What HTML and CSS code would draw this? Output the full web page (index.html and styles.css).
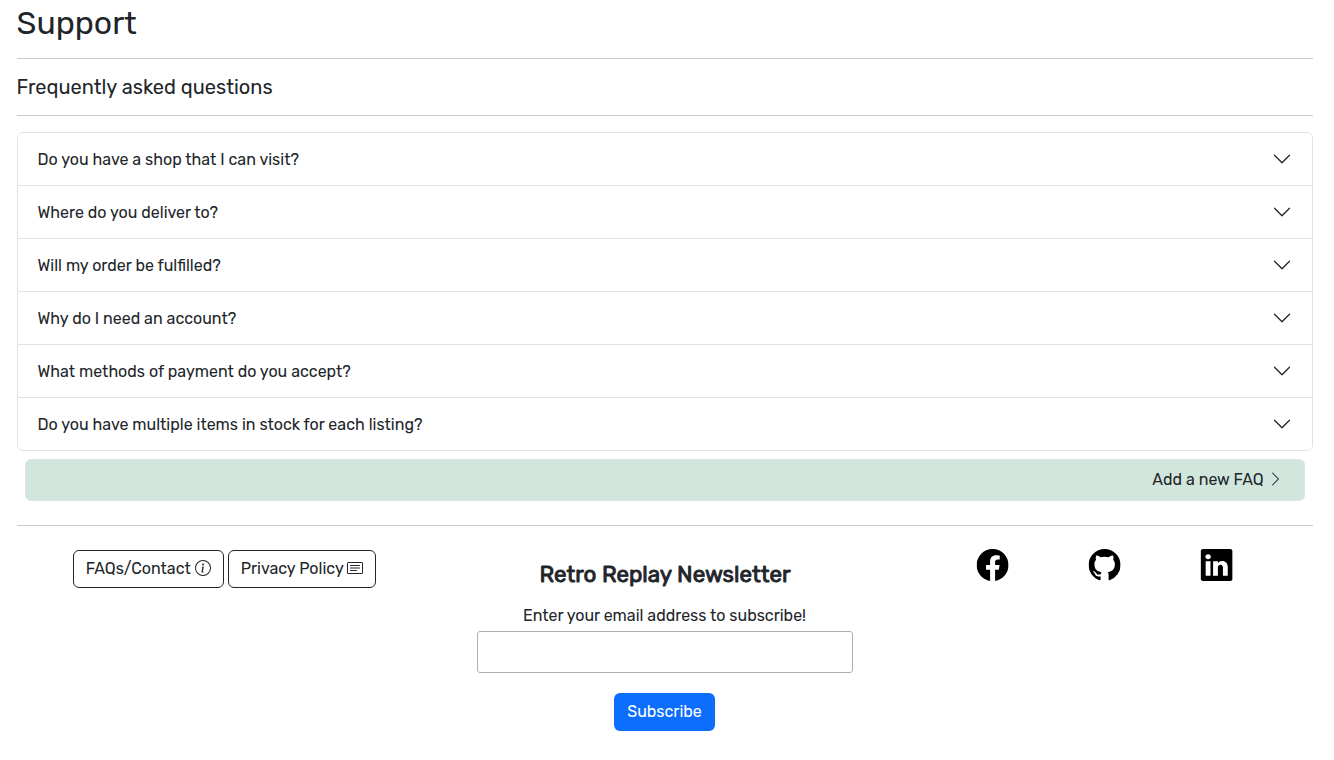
FILE: index.html
```html
<!DOCTYPE html>
<html lang="en">
<head>
<meta charset="utf-8">
<title>Support</title>
<link rel="stylesheet" href="styles.css">
</head>
<body>
<svg class="sprite" aria-hidden="true">
  <symbol id="chevron-down" viewBox="0 0 16 16"><path fill-rule="evenodd" d="M1.646 4.646a.5.5 0 0 1 .708 0L8 10.293l5.646-5.647a.5.5 0 0 1 .708.708l-6 6a.5.5 0 0 1-.708 0l-6-6a.5.5 0 0 1 0-.708z"/></symbol>
</svg>
<main class="page">
  <h1 class="title">Support</h1>
  <hr class="rule">
  <h2 class="subtitle">Frequently asked questions</h2>
  <hr class="rule">
  <div class="accordion">
    <button class="question"><span class="question-text">Do you have a shop that I can visit?</span><svg class="chevron"><use href="#chevron-down"/></svg></button>
    <button class="question"><span class="question-text">Where do you deliver to?</span><svg class="chevron"><use href="#chevron-down"/></svg></button>
    <button class="question"><span class="question-text">Will my order be fulfilled?</span><svg class="chevron"><use href="#chevron-down"/></svg></button>
    <button class="question"><span class="question-text">Why do I need an account?</span><svg class="chevron"><use href="#chevron-down"/></svg></button>
    <button class="question"><span class="question-text">What methods of payment do you accept?</span><svg class="chevron"><use href="#chevron-down"/></svg></button>
    <button class="question"><span class="question-text">Do you have multiple items in stock for each listing?</span><svg class="chevron"><use href="#chevron-down"/></svg></button>
  </div>
  <a class="add-faq"><span>Add a new FAQ</span><svg class="icon" viewBox="0 0 16 16"><path fill-rule="evenodd" d="M4.646 1.646a.5.5 0 0 1 .708 0l6 6a.5.5 0 0 1 0 .708l-6 6a.5.5 0 0 1-.708-.708L10.293 8 4.646 2.354a.5.5 0 0 1 0-.708z"/></svg></a>
  <hr class="rule footer-rule">
</main>
<footer class="footer">
  <div class="links">
    <a class="btn-outline btn-faq"><span>FAQs/Contact</span><svg class="icon" viewBox="0 0 16 16"><path d="M8 15A7 7 0 1 1 8 1a7 7 0 0 1 0 14zm0 1A8 8 0 1 0 8 0a8 8 0 0 0 0 16z"/><path d="m8.930 6.588-2.290.287-.082.380.450.083c.294.070.352.176.288.469l-.738 3.468c-.194.897.105 1.319.808 1.319.545 0 1.178-.252 1.465-.598l.088-.416c-.200.176-.492.246-.686.246-.275 0-.375-.193-.304-.533zM9 4.500a1 1 0 1 1-2 0 1 1 0 0 1 2 0z"/></svg></a>
    <a class="btn-outline btn-privacy"><span>Privacy Policy</span><svg class="icon" viewBox="0 0 16 16"><path d="M14.500 3a.5.5 0 0 1 .5.5v9a.5.5 0 0 1-.5.5h-13a.5.5 0 0 1-.5-.5v-9a.5.5 0 0 1 .5-.5zm-13-1A1.500 1.500 0 0 0 0 3.500v9A1.500 1.500 0 0 0 1.500 14h13a1.500 1.500 0 0 0 1.500-1.500v-9A1.500 1.500 0 0 0 14.500 2z"/><path d="M3 5.500a.5.5 0 0 1 .5-.5h9a.5.5 0 0 1 0 1h-9a.5.5 0 0 1-.5-.5M3 8a.5.5 0 0 1 .5-.5h9a.5.5 0 0 1 0 1h-9A.5.5 0 0 1 3 8m0 2.500a.5.5 0 0 1 .5-.5h6a.5.5 0 0 1 0 1h-6a.5.5 0 0 1-.5-.5"/></svg></a>
  </div>
  <form class="newsletter">
    <h3 class="news-title">Retro Replay Newsletter</h3>
    <label class="news-label" for="email">Enter your email address to subscribe!</label>
    <input class="news-input" id="email" type="email">
    <button class="subscribe" type="button">Subscribe</button>
  </form>
  <div class="social">
    <svg class="logo" viewBox="0 0 16 16"><path d="M16 8.049c0-4.446-3.582-8.050-8-8.050C3.580 0-.002 3.603-.002 8.050c0 4.017 2.926 7.347 6.750 7.951v-5.625h-2.030V8.050H6.750V6.275c0-2.017 1.195-3.131 3.022-3.131.876 0 1.791.157 1.791.157v1.980h-1.009c-.993 0-1.303.621-1.303 1.258v1.510h2.218l-.354 2.326H9.250V16c3.824-.604 6.750-3.934 6.750-7.951z"/></svg>
    <svg class="logo" viewBox="0 0 16 16"><path d="M8 0C3.580 0 0 3.580 0 8c0 3.540 2.290 6.530 5.470 7.590.4.070.55-.17.55-.38 0-.19-.01-.82-.01-1.490-2.010.37-2.530-.49-2.690-.94-.09-.23-.48-.94-.82-1.130-.28-.15-.68-.52-.01-.53.63-.01 1.080.58 1.230.82.72 1.210 1.870.87 2.330.66.07-.52.28-.87.51-1.070-1.780-.2-3.640-.89-3.640-3.950 0-.87.31-1.590.82-2.150-.08-.2-.36-1.020.08-2.120 0 0 .67-.21 2.200.82.64-.18 1.320-.27 2-.27s1.360.09 2 .27c1.530-1.040 2.200-.82 2.200-.82.44 1.100.16 1.920.08 2.120.51.56.82 1.270.82 2.150 0 3.070-1.870 3.750-3.650 3.950.29.25.54.73.54 1.480 0 1.070-.01 1.930-.01 2.200 0 .21.15.46.55.38A8.010 8.010 0 0 0 16 8c0-4.420-3.580-8-8-8z"/></svg>
    <svg class="logo" viewBox="0 0 16 16"><path d="M0 1.146C0 .513.526 0 1.175 0h13.650C15.474 0 16 .513 16 1.146v13.708c0 .633-.526 1.146-1.175 1.146H1.175C.526 16 0 15.487 0 14.854zm4.943 12.248V6.169H2.542v7.225zm-1.200-8.212c.837 0 1.358-.554 1.358-1.248-.015-.709-.52-1.248-1.342-1.248S2.400 3.226 2.400 3.934c0 .694.521 1.248 1.327 1.248zm4.908 8.212V9.359c0-.216.016-.432.08-.586.173-.431.568-.878 1.232-.878.869 0 1.216.662 1.216 1.634v3.865h2.401V9.250c0-2.220-1.184-3.252-2.764-3.252-1.274 0-1.845.7-2.165 1.193v.025h-.016l.016-.025V6.169h-2.400c.03.678 0 7.225 0 7.225z"/></svg>
  </div>
</footer>
</body>
</html>
```
FILE: styles.css
```css
* { box-sizing: border-box; }
body {
  margin: 0;
  background: #fff;
  color: #212529;
  font: 400 16px/24px Rubik, Roboto, sans-serif;
}
span, h1, h2, h3, label { white-space: nowrap; }
.sprite { position: absolute; width: 0; height: 0; }
.page { padding: 4px 21px 0 16.5px; width: 1334px; }
.title { margin: 0; font-size: 32px; line-height: 38px; font-weight: 400; }
.rule { margin: 16px 0; border: 0; border-top: 1px solid #c8c9ca; }
.subtitle { margin: 0; font-size: 20px; line-height: 24px; font-weight: 400; }
.accordion { border: 1px solid #dee2e6; border-radius: 6px; overflow: hidden; }
.question {
  display: flex;
  align-items: center;
  justify-content: space-between;
  width: 100%;
  height: 53px;
  padding: 0 20px;
  border: 0;
  border-bottom: 1px solid #dee2e6;
  background: #fff;
  color: inherit;
  font: inherit;
}
.question:last-child { height: 52px; border-bottom: 0; }
.question-text { padding-top: 2px; }
.chevron { width: 20px; height: 20px; fill: #212529; }
.add-faq {
  display: flex;
  align-items: center;
  justify-content: flex-end;
  gap: 4px;
  height: 42px;
  margin: 8px 8px 24px;
  padding: 0 20.5px 0 21px;
  border: 1px solid #dee2e6;
  border-radius: 6px;
  background: #d1e7dd;
}
.add-faq .icon { transform: translateX(-0.5px); }
.icon { width: 16px; height: 16px; margin-bottom: 2px; fill: currentColor; flex: none; }
.footer-rule { margin: 24px 0 0; }
.footer { display: grid; grid-template-columns: repeat(3, 440px); padding: 0 4.5px; }
.links { display: flex; gap: 4px; align-items: flex-start; padding: 24px 0 0 68.2px; }
.btn-outline {
  display: flex;
  align-items: center;
  justify-content: space-between;
  height: 38px;
  padding: 0 12px;
  border: 1px solid #212529;
  border-radius: 6px;
}
.btn-faq { width: 151px; }
.btn-privacy { width: 148px; }
.newsletter { display: flex; flex-direction: column; align-items: center; padding-top: 35px; }
.news-title { margin: 0 0 15px; padding-left: 1px; font-size: 22.4px; line-height: 28px; font-weight: 400; -webkit-text-stroke: 0.9px currentColor; }
.news-label { margin-bottom: 3px; }
.news-input { width: 376px; height: 42px; margin: 0 0 20px; border: 1px solid #abb0b2; border-radius: 3px; background: #fff; }
.subscribe { width: 101px; height: 38px; padding: 0; border: 0; border-radius: 6px; background: #0d6efd; color: #fff; font: inherit; }
.social { display: flex; justify-content: center; gap: 80px; padding: 23px 0 0; }
.logo { width: 32px; height: 32px; fill: #000; transform: translateX(-0.4px); }
```
